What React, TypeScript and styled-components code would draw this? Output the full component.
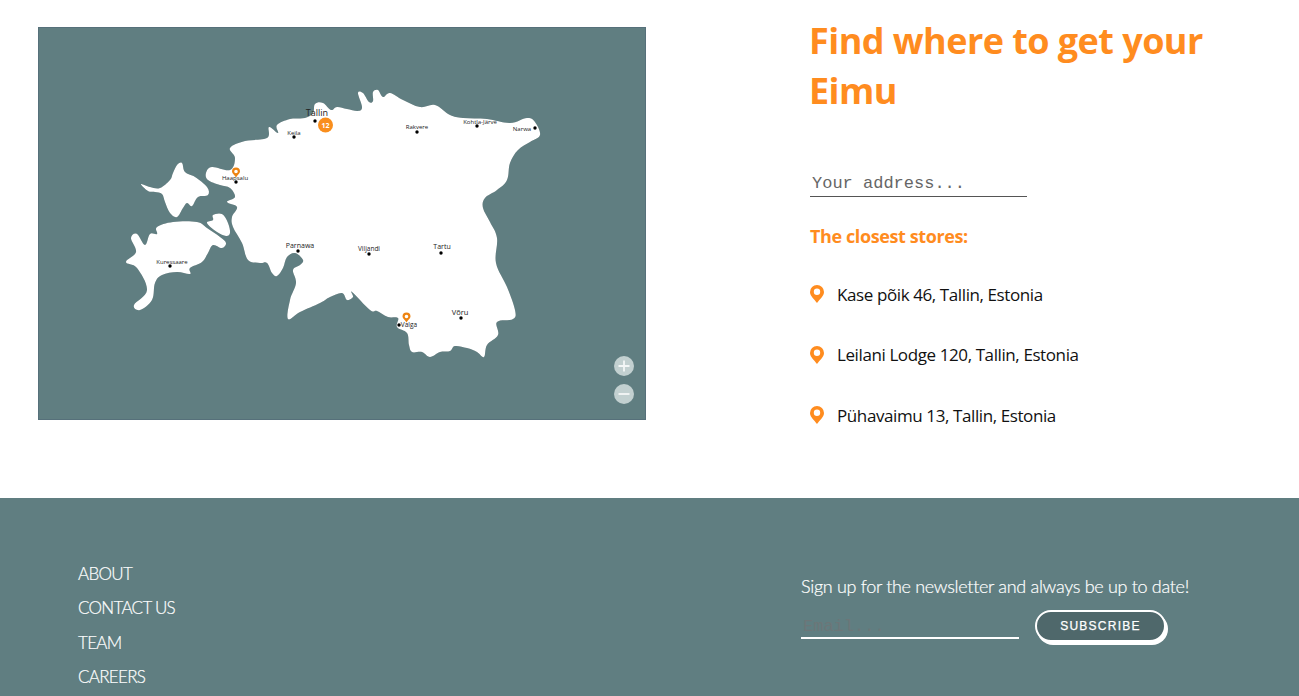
import React from "react";
import styled, { createGlobalStyle } from "styled-components";

const Global = createGlobalStyle`
  html, body { margin: 0; padding: 0; height: 100%; overflow: hidden; background: #fff; }
  * { box-sizing: border-box; }
  input::placeholder { opacity: 1; }
`;

const Page = styled.div`
  height: 696px;
  display: grid;
  grid-template-rows: 498px 198px;
  font-family: "Open Sans", "Liberation Sans", sans-serif;
`;

const Main = styled.main`
  display: grid;
  grid-template-columns: 810px 1fr;
  padding-top: 16px;
`;

const MapColumn = styled.section`
  padding: 11px 0 0 38px;
`;

const MapFrame = styled.div`
  position: relative;
  width: 608px;
  height: 393px;
  background: #607e81;
  box-shadow: inset 0 0 0 1px #56707a;
`;

const MapSvg = styled.svg`
  display: block;
  width: 608px;
  height: 393px;
`;

const ZoomStack = styled.div`
  position: absolute;
  left: 576px;
  top: 329px;
  display: flex;
  flex-direction: column;
  gap: 8px;
`;

const ZoomButton = styled.button`
  width: 20px;
  height: 20px;
  padding: 0;
  border: 0;
  border-radius: 50%;
  background: #c2d0d0;
  display: flex;
  align-items: center;
  justify-content: center;
`;

const Finder = styled.section`
  display: flex;
  flex-direction: column;
  align-items: flex-start;
`;

const Title = styled.h1`
  margin: 0 0 0 -1px;
  width: 420px;
  font-family: "Open Sans", sans-serif;
  font-weight: 700;
  font-size: 36px;
  line-height: 50px;
  letter-spacing: -0.55px;
  color: #ff8c1f;
`;

const AddressInput = styled.input`
  margin-top: 54px;
  width: 217px;
  height: 27px;
  border: 0;
  border-bottom: 1px solid #555;
  outline: none;
  padding: 0 2px;
  font-family: "Liberation Mono", monospace;
  font-size: 17px;
  color: #333;
  background: transparent;
  &::placeholder { color: #666; }
`;

const Subtitle = styled.h2`
  margin: 27px 0 0;
  font-family: "Open Sans", sans-serif;
  font-weight: 700;
  font-size: 18px;
  line-height: 24px;
  letter-spacing: -0.4px;
  color: #ff8c1f;
`;

const StoreList = styled.ul`
  list-style: none;
  margin: 34px 0 0;
  padding: 0;
  display: flex;
  flex-direction: column;
  gap: 36.5px;
`;

const StoreRow = styled.li`
  display: flex;
  align-items: center;
  gap: 13px;
  height: 24px;
  font-size: 17px;
  letter-spacing: -0.4px;
  color: #111;
`;

const Footer = styled.footer`
  background: #607e81;
  display: grid;
  grid-template-columns: 801px 1fr;
  padding-top: 65px;
  color: #fff;
  font-family: Lato, sans-serif;
  font-weight: 300;
  -webkit-text-stroke: 0.2px #fff;
`;

const FooterNav = styled.nav`
  padding-left: 78px;
  display: flex;
  flex-direction: column;
  gap: 12.3px;
`;

const FooterLink = styled.a`
  font-size: 17px;
  line-height: 22px;
  letter-spacing: -0.7px;
  color: #fff;
`;

const Newsletter = styled.div`
  padding-top: 12px;
`;

const NewsText = styled.p`
  margin: 0;
  font-size: 18px;
  line-height: 22px;
  letter-spacing: -0.31px;
`;

const NewsForm = styled.form`
  display: flex;
  align-items: flex-start;
  gap: 16px;
  margin-top: 13px;
`;

const EmailInput = styled.input`
  width: 218px;
  height: 29px;
  border: 0;
  border-bottom: 2px solid #fff;
  outline: none;
  padding: 5px 2px 0;
  background: transparent;
  font-family: "Liberation Mono", monospace;
  font-size: 17px;
  -webkit-text-stroke: 0;
  &::placeholder { color: #6c7678; }
`;

const SubscribeButton = styled.button`
  width: 131px;
  height: 32px;
  border: 2px solid #fff;
  border-radius: 16px;
  background: #4f686b;
  box-shadow: 2px 3px 0 #fff;
  color: #fff;
  font-family: "Liberation Sans", sans-serif;
  font-size: 12px;
  font-weight: 400;
  letter-spacing: 1.25px;
  padding: 0;
  -webkit-text-stroke: 0.25px #fff;
`;

type Pt = [number, number];

const smooth = (pts: Pt[], k = 0.18) => {
  const n = pts.length;
  let d = `M${pts[0][0]} ${pts[0][1]}`;
  for (let i = 0; i < n; i++) {
    const p0 = pts[(i - 1 + n) % n];
    const p1 = pts[i];
    const p2 = pts[(i + 1) % n];
    const p3 = pts[(i + 2) % n];
    const c1x = p1[0] + (p2[0] - p0[0]) * k;
    const c1y = p1[1] + (p2[1] - p0[1]) * k;
    const c2x = p2[0] - (p3[0] - p1[0]) * k;
    const c2y = p2[1] - (p3[1] - p1[1]) * k;
    d += `C${c1x.toFixed(1)} ${c1y.toFixed(1)} ${c2x.toFixed(1)} ${c2y.toFixed(1)} ${p2[0]} ${p2[1]}`;
  }
  return d + "Z";
};

const mainland: Pt[] = [
  [315, 104], [323, 103], [331, 110], [337, 107], [347, 109], [358, 111], [362, 107], [358, 93], [363, 93], [369, 102], [373, 101],
  [373, 92], [378, 90], [383, 97], [390, 93], [403, 100], [420, 107], [435, 105], [450, 115], [463, 118], [487, 119], [510, 123],
  [527, 118], [535, 122], [540, 135], [530, 142], [518, 150], [510, 163], [507, 180], [497, 190], [485, 198], [483, 208], [490, 222],
  [497, 238], [496, 263], [507, 287], [515, 310], [513, 319], [497, 322], [498, 335], [487, 345], [484, 357], [477, 352], [467, 348],
  [455, 346], [450, 351], [440, 352], [430, 357], [422, 352], [412, 352], [409, 345], [407, 333], [397, 327], [398, 318], [388, 317],
  [377, 311], [370, 310], [352, 292], [353, 297], [347, 300], [342, 293], [330, 297], [320, 303], [300, 312], [288, 319], [290, 300],
  [296, 283], [293, 270], [300, 265], [303, 260], [295, 253], [287, 257], [283, 268], [277, 276], [272, 273], [267, 263], [260, 263],
  [248, 260], [242, 243], [233, 227], [232, 217], [237, 207], [227, 202], [235, 197], [230, 188], [220, 185], [208, 180], [206, 173],
  [212, 167], [230, 170], [235, 158], [230, 148], [245, 141], [267, 138], [269, 127], [278, 133], [277, 125], [290, 119], [305, 118],
  [313, 113],
];
const saaremaa: Pt[] = [
  [157, 227], [173, 222], [197, 222], [207, 228], [220, 237], [226, 243], [222, 248], [213, 245], [208, 253], [202, 262], [190, 268],
  [190, 274], [177, 272], [162, 275], [155, 283], [152, 300], [140, 310], [134, 305], [147, 290], [137, 268], [126, 262], [136, 252],
  [131, 238], [137, 234], [145, 245], [150, 234], [157, 234],
];
const muhu: Pt[] = [[207, 223], [213, 220], [213, 215], [222, 214], [228, 223], [230, 233], [226, 236], [217, 232]];
const hiiumaa: Pt[] = [
  [141, 184], [150, 187], [160, 188], [170, 180], [173, 173], [177, 165], [182, 163], [185, 172], [195, 177], [207, 187], [208, 195],
  [198, 197], [192, 206], [187, 203], [183, 208], [177, 217], [170, 213], [165, 202], [162, 194], [155, 192], [148, 191],
];

type City = { name: string; x: number; y: number; tx: number; ty: number; size: number };
const cities: City[] = [
  { name: "Tallin", x: 315, y: 121, tx: 317, ty: 116, size: 9 },
  { name: "Keila", x: 294, y: 137, tx: 294, ty: 135, size: 6 },
  { name: "Haapsalu", x: 236, y: 182, tx: 235, ty: 180, size: 6 },
  { name: "Rakvere", x: 417, y: 132, tx: 417, ty: 129, size: 6 },
  { name: "Kohtla-Järve", x: 477, y: 126, tx: 480, ty: 124, size: 6 },
  { name: "Narwa", x: 535, y: 128, tx: 522, ty: 131, size: 6 },
  { name: "Parnawa", x: 298, y: 251, tx: 300, ty: 248, size: 7 },
  { name: "Viljandi", x: 369, y: 254, tx: 369, ty: 251, size: 6.5 },
  { name: "Tartu", x: 441, y: 253, tx: 442, ty: 249, size: 7 },
  { name: "Kuressaare", x: 170, y: 266, tx: 172, ty: 264, size: 6 },
  { name: "Valga", x: 399, y: 325, tx: 409, ty: 327, size: 6.5 },
  { name: "Võru", x: 461, y: 318, tx: 460, ty: 315, size: 7.5 },
];

const MapPin = ({ x, y }: { x: number; y: number }) => (
  <path
    transform={`translate(${x - 4} ${y - 4.5})`}
    fillRule="evenodd"
    fill="#ee8412"
    d="M4 0A4 4 0 0 1 8 4C8 6 5.4 7.6 4 10C2.6 7.6 0 6 0 4A4 4 0 0 1 4 0ZM4 2.2A1.8 1.8 0 1 0 4 5.8A1.8 1.8 0 1 0 4 2.2Z"
  />
);

const StorePin = () => (
  <svg width="14" height="18" viewBox="0 0 14 18" aria-hidden="true">
    <path
      fillRule="evenodd"
      fill="#ff8c1f"
      d="M7 0A7 7 0 0 1 14 7C14 11 9.5 14.5 7 18C4.5 14.5 0 11 0 7A7 7 0 0 1 7 0ZM7 3.6A3.2 3.2 0 1 0 7 10A3.2 3.2 0 1 0 7 3.6Z"
    />
  </svg>
);

const EstoniaMap = () => (
  <MapSvg viewBox="38 27 608 393" role="img" aria-label="Map of Estonia">
    <g fill="#fff" style={{ filter: "drop-shadow(0.5px 0.5px 0.6px rgba(40,60,62,.55))" }}>
      <path d={smooth(mainland)} />
      <path d={smooth(saaremaa)} />
      <path d={smooth(muhu)} />
      <path d={smooth(hiiumaa)} />
    </g>
    {cities.map((c) => (
      <g key={c.name}>
        <circle cx={c.x} cy={c.y} r="1.7" fill="#000" />
        <text
          x={c.tx}
          y={c.ty}
          fontSize={c.size}
          textAnchor="middle"
          fontFamily="'Open Sans', sans-serif"
          fill="#222"
        >
          {c.name}
        </text>
      </g>
    ))}
    <MapPin x={236} y={172} />
    <MapPin x={406.5} y={317} />
    <circle cx="325.5" cy="125" r="7.5" fill="#f98e1d" />
    <text x="325.5" y="127.5" fontSize="7" fontWeight="700" textAnchor="middle" fill="#fff" fontFamily="'Open Sans', sans-serif">
      12
    </text>
  </MapSvg>
);

const stores = ["Kase põik 46, Tallin, Estonia", "Leilani Lodge 120, Tallin, Estonia", "Pühavaimu 13, Tallin, Estonia"];
const links = ["ABOUT", "CONTACT US", "TEAM", "CAREERS"];

export default function App() {
  return (
    <>
      <Global />
      <Page>
        <Main>
          <MapColumn>
            <MapFrame>
              <EstoniaMap />
              <ZoomStack>
                <ZoomButton aria-label="Zoom in">
                  <svg width="12" height="12" viewBox="0 0 12 12">
                    <path d="M6 .5V11.5M.5 6H11.5" stroke="#f4f7f7" strokeWidth="1.8" />
                  </svg>
                </ZoomButton>
                <ZoomButton aria-label="Zoom out">
                  <svg width="12" height="12" viewBox="0 0 12 12">
                    <path d="M.5 6H11.5" stroke="#f4f7f7" strokeWidth="1.8" />
                  </svg>
                </ZoomButton>
              </ZoomStack>
            </MapFrame>
          </MapColumn>
          <Finder>
            <Title>Find where to get your Eimu</Title>
            <AddressInput placeholder="Your address..." />
            <Subtitle>The closest stores:</Subtitle>
            <StoreList>
              {stores.map((s) => (
                <StoreRow key={s}>
                  <StorePin />
                  {s}
                </StoreRow>
              ))}
            </StoreList>
          </Finder>
        </Main>
        <Footer>
          <FooterNav>
            {links.map((l) => (
              <FooterLink key={l}>{l}</FooterLink>
            ))}
          </FooterNav>
          <Newsletter>
            <NewsText>Sign up for the newsletter and always be up to date!</NewsText>
            <NewsForm>
              <EmailInput placeholder="Email..." />
              <SubscribeButton type="button">SUBSCRIBE</SubscribeButton>
            </NewsForm>
          </Newsletter>
        </Footer>
      </Page>
    </>
  );
}
